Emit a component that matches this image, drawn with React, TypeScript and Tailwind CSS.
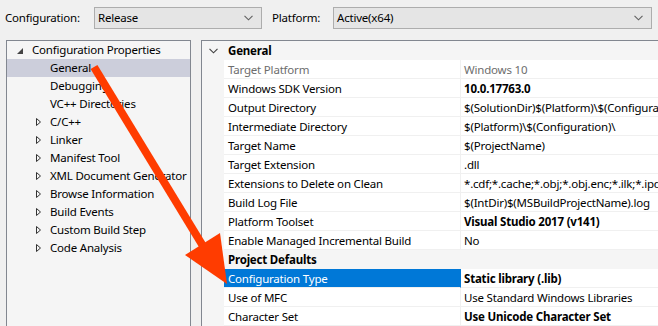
import React from "react";

const treeItems = [
  { label: "General", expandable: false, selected: true },
  { label: "Debugging", expandable: false },
  { label: "VC++ Directories", expandable: false },
  { label: "C/C++", expandable: true },
  { label: "Linker", expandable: true },
  { label: "Manifest Tool", expandable: true },
  { label: "XML Document Generator", expandable: true },
  { label: "Browse Information", expandable: true },
  { label: "Build Events", expandable: true },
  { label: "Custom Build Step", expandable: true },
  { label: "Code Analysis", expandable: true },
];

type Prop = { name: string; value: string; bold?: boolean; muted?: boolean; selected?: boolean };

const general: Prop[] = [
  { name: "Target Platform", value: "Windows 10", muted: true },
  { name: "Windows SDK Version", value: "10.0.17763.0", bold: true },
  { name: "Output Directory", value: "$(SolutionDir)$(Platform)\\$(Configuration)\\" },
  { name: "Intermediate Directory", value: "$(Platform)\\$(Configuration)\\" },
  { name: "Target Name", value: "$(ProjectName)" },
  { name: "Target Extension", value: ".dll" },
  { name: "Extensions to Delete on Clean", value: "*.cdf;*.cache;*.obj;*.obj.enc;*.ilk;*.ipdb;*.iobj" },
  { name: "Build Log File", value: "$(IntDir)$(MSBuildProjectName).log" },
  { name: "Platform Toolset", value: "Visual Studio 2017 (v141)", bold: true },
  { name: "Enable Managed Incremental Build", value: "No" },
];

const defaults: Prop[] = [
  { name: "Configuration Type", value: "Static library (.lib)", bold: true, selected: true },
  { name: "Use of MFC", value: "Use Standard Windows Libraries" },
  { name: "Character Set", value: "Use Unicode Character Set", bold: true },
];

function Chevron({ className }: { className?: string }) {
  return (
    <svg width="9" height="6" viewBox="0 0 9 6" className={className}>
      <path d="M0.5 0.8 L4.5 4.8 L8.5 0.8" fill="none" stroke="currentColor" strokeWidth="1.1" />
    </svg>
  );
}

function Combo({ value, width }: { value: string; width: string }) {
  return (
    <div className={`${width} h-[22px] flex items-center justify-between border border-[#adadad] bg-[#e5e5e5] pl-[3px] pr-[8px]`}>
      <span>{value}</span>
      <Chevron className="text-[#606060]" />
    </div>
  );
}

function Section({ title, rows }: { title: string; rows: Prop[] }) {
  return (
    <>
      <div className="h-[19px] flex items-center bg-[#f5f5f5] pt-[1px]">
        <div className="w-[22px] shrink-0 flex justify-center pl-[1px]">
          <Chevron className="text-[#404040]" />
        </div>
        <span className="font-bold pl-[4px]">{title}</span>
      </div>
      {rows.map((r) => (
        <div key={r.name} className="h-[19px] flex">
          <div className="w-[22px] shrink-0 bg-[#f5f5f5]" />
          <div
            className={`w-[236px] shrink-0 pl-[4px] pt-[1px] flex items-center border-b border-[#f0f0f0] whitespace-nowrap overflow-hidden ${
              r.selected ? "bg-[#0078d7] text-white border-[#0078d7]" : r.muted ? "bg-white text-[#6d6d6d]" : "bg-white"
            }`}
          >
            {r.name}
          </div>
          <div
            className={`flex-1 min-w-0 pl-[3px] pt-[1px] flex items-center border-l border-b border-[#f0f0f0] bg-white whitespace-nowrap overflow-hidden ${
              r.bold ? "font-bold" : ""
            } ${r.muted ? "text-[#6d6d6d]" : ""} ${r.selected ? "border-l-[#0078d7]" : ""}`}
          >
            {r.value}
          </div>
        </div>
      ))}
    </>
  );
}

export default function App() {
  return (
    <div
      className="relative w-[658px] h-[326px] overflow-hidden bg-[#f0f0f0] text-[11.5px] tracking-[-0.2px] leading-none text-black"
      style={{ fontFamily: '"Segoe UI", "Noto Sans", sans-serif' }}
    >
      {/* toolbar */}
      <div className="h-[40px] flex items-center pl-[5px] pb-[4px]">
        <span className="w-[89px] shrink-0">Configuration:</span>
        <Combo value="Release" width="w-[168px] shrink-0" />
        <span className="ml-[10px] w-[61px] shrink-0">Platform:</span>
        <Combo value="Active(x64)" width="w-[319px] shrink-0" />
      </div>

      <div className="flex pl-[6px] h-[286px]">
        {/* tree */}
        <div className="w-[185px] shrink-0 border border-b-0 border-[#828790] bg-[#f5f5f5] overflow-hidden">
          <div className="h-[18px] flex items-center">
            <svg width="6" height="6" viewBox="0 0 6 6" className="ml-[10px] mr-[9px] mt-[2px]">
              <path d="M6 0 L6 6 L0 6 Z" fill="#444" />
            </svg>
            <span>Configuration Properties</span>
          </div>
          {treeItems.map((t) => (
            <div
              key={t.label}
              className={`h-[18px] flex items-center whitespace-nowrap ${t.selected ? "bg-[#cccedb]" : ""}`}
            >
              <div className="w-[43px] shrink-0 flex justify-end pr-[9px]">
                {t.expandable && (
                  <svg width="5" height="8" viewBox="0 0 5 8">
                    <path d="M0.5 0.5 L4.5 4 L0.5 7.5 Z" fill="none" stroke="#333" strokeWidth="1" />
                  </svg>
                )}
              </div>
              <span>{t.label}</span>
            </div>
          ))}
        </div>

        {/* property grid */}
        <div className="ml-[10px] flex-1 min-w-0 border-l border-t border-[#828790] bg-[#f5f5f5] flex flex-col">
          <Section title="General" rows={general} />
          <Section title="Project Defaults" rows={defaults} />
        </div>
      </div>

      {/* annotation arrow */}
      <svg className="absolute left-0 top-0 pointer-events-none" width="658" height="326" viewBox="0 0 658 326">
        <line x1="94" y1="67" x2="206" y2="251" stroke="#ff3c00" strokeWidth="8" strokeLinecap="butt" />
        <path d="M227 284 L220 233 L185 255 Z" fill="#ff3c00" />
      </svg>
    </div>
  );
}
